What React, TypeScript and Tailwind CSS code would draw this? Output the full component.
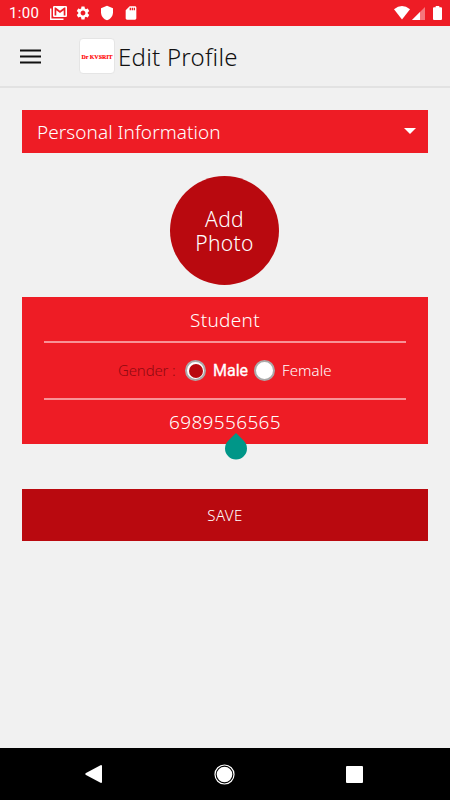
import { useState } from "react";
import {
  MdSettings,
  MdShield,
  MdSdCard,
} from "react-icons/md";

type Gender = "male" | "female";

const genderOptions: { value: Gender; label: string }[] = [
  { value: "male", label: "Male" },
  { value: "female", label: "Female" },
];

function StatusBar() {
  return (
    <div className="flex h-[26px] items-center bg-[#ee1c25] pl-[9px] pr-[8px] text-white">
      <span className="w-[41px] font-['Roboto',sans-serif] text-[15px] leading-[26px] tracking-[0.3px]">
        1:00
      </span>
      <svg className="h-[14px] w-[17px]" viewBox="0 0 17 14" fill="none">
        <path d="M.75 2.5v10.7H13.5" stroke="currentColor" strokeWidth="1.4" />
        <path
          fillRule="evenodd"
          fill="currentColor"
          d="M4.5 0h11A1.3 1.3 0 0 1 17 1.3v8.4a1.3 1.3 0 0 1-1.5 1.3h-11A1.3 1.3 0 0 1 3 9.7V1.3A1.3 1.3 0 0 1 4.5 0zM4.6 1.5v8h1.7V4.3L10 7l3.7-2.7v5.2h1.7v-8h-1.1L10 4.7 5.7 1.5z"
        />
      </svg>
      <MdSettings className="ml-2 size-4" />
      <MdShield className="ml-2 size-4" />
      <MdSdCard className="ml-[8px] size-4" />
      <div className="ml-auto flex items-center">
        <svg className="h-[14px] w-4" viewBox="0 0 16 14" fill="currentColor">
          <path d="M0 3.2Q8-3 16 3.2L8 13.500z" />
        </svg>
        <svg className="ml-[2px] h-[13px] w-[13px]" viewBox="0 0 13 13" fill="currentColor">
          <path opacity="0.4" d="M0 13 13 0v13z" />
          <path d="M0 13 8 5v8z" />
        </svg>
        <svg className="ml-2 h-[14px] w-[9px]" viewBox="0 0 9 14" fill="currentColor">
          <path d="M2.7 0h3.6v1.3H8q1 0 1 1V13q0 1-1 1H1q-1 0-1-1V2.3q0-1 1-1h1.700z" />
        </svg>
      </div>
    </div>
  );
}

function AppBar() {
  return (
    <header className="flex h-[62px] items-center border-b-2 border-[#e2e2e2] bg-[#f0f0f0] pl-5 text-[#111]">
      <button type="button" aria-label="Menu">
        <svg className="mt-px h-[15px] w-[21px]" viewBox="0 0 21 15" fill="currentColor">
          <path d="M0 .6h21v1.900H0zM0 6.600h21v1.900H0zM0 12.600h21v1.900H0z" />
        </svg>
      </button>
      <div className="ml-[38px] flex h-[36px] w-[36px] items-center justify-center rounded-[4px] border border-[#e5e5e5] bg-white">
        <span className="whitespace-nowrap pt-px font-['Liberation_Serif',serif] text-[6px] font-bold leading-none tracking-[-0.05px] text-[#f00] [-webkit-text-stroke:0.15px_#f00]">
          Dr KVSRIT
        </span>
      </div>
      <h1 className="ml-[3px] mt-[2px] text-[24px] font-light tracking-[0.25px]">Edit Profile</h1>
    </header>
  );
}

function GenderField() {
  const [gender, setGender] = useState<Gender>("male");

  return (
    <div className="mx-[22px] flex h-[57px] items-center border-b-2 border-[#f89296] pl-[74px]">
      <span className="w-[67px] text-[15px] font-light tracking-[-0.15px] text-[#8e0a10]">
        Gender :
      </span>
      {genderOptions.map((option) => (
        <button
          key={option.value}
          type="button"
          onClick={() => setGender(option.value)}
          className="flex w-[69px] items-center text-white"
        >
          <span className="grid size-[21px] shrink-0 place-items-center rounded-full border-2 border-[#aaa] bg-white">
            {gender === option.value && (
              <span className="size-[14px] rounded-full bg-[#b9090f]" />
            )}
          </span>
          <span
            className={
              gender === option.value
                ? "ml-[7px] pt-px font-['Roboto',sans-serif] text-[16px] [-webkit-text-stroke:0.3px_#fff]"
                : "ml-[7px] text-[15px] font-light tracking-[0.1px]"
            }
          >
            {option.label}
          </span>
        </button>
      ))}
    </div>
  );
}

function NavBar() {
  return (
    <nav className="mt-auto flex h-[52px] items-center justify-between bg-black pl-[85px] pr-[87px] text-white">
      <svg className="h-[18px] w-[17px]" viewBox="0 0 17 18" fill="currentColor">
        <path d="M16 0q1 0 1 1v16q0 1-1 1L1 10q-1.500-1 0-2z" />
      </svg>
      <svg className="size-[21px]" viewBox="0 0 21 21" fill="currentColor">
        <circle cx="10.5" cy="10.5" r="9.5" fill="none" stroke="currentColor" strokeWidth="1.2" />
        <circle cx="10.5" cy="10.5" r="7.8" />
      </svg>
      <span className="size-[17px] rounded-[1px] bg-white" />
    </nav>
  );
}

export default function App() {
  return (
    <div className="flex h-[800px] w-[450px] flex-col overflow-hidden bg-[#f1f1f1] font-['Noto_Sans',sans-serif]">
      <StatusBar />
      <AppBar />
      <main className="flex flex-col px-[22px] pt-[22px] text-white">
        <button
          type="button"
          className="flex h-[43px] items-center justify-between bg-[#ee1c25] pl-[15px] pr-3 text-[19px] font-light tracking-[0.05px]"
        >
          <span className="pt-px">Personal Information</span>
          <svg className="mb-px h-[6px] w-3" viewBox="0 0 12 6" fill="currentColor">
            <path d="M0 0h12L6 6z" />
          </svg>
        </button>

        <button
          type="button"
          className="mt-[23px] flex size-[109px] flex-col items-center justify-center self-center rounded-full bg-[#b9090f] text-[21px] font-light leading-6 tracking-[0.3px] mr-px"
        >
          <span>Add</span>
          <span>Photo</span>
        </button>

        <section className="relative mt-3 h-[147px] bg-[#ee1c25]">
          <div className="mx-[22px] flex h-[46px] items-center justify-center border-b-2 border-[#f89296] pt-[2px] text-[19px] font-light tracking-[0.3px]">
            Student
          </div>
          <GenderField />
          <div className="flex h-[45px] items-center justify-center text-[19px] font-light tracking-[0.35px]">
            6989556565
          </div>
          <svg
            className="absolute left-[203px] top-[136px] h-[27px] w-[22px]"
            viewBox="0 0 22 27"
            fill="#009688"
          >
            <path d="M11 0 18.800 7.700A11 11 0 1 1 3.200 7.700z" />
          </svg>
        </section>

        <button
          type="button"
          className="mt-[45px] h-[52px] bg-[#b9090f] text-[15px] font-light tracking-[0.4px]"
        >
          SAVE
        </button>
      </main>
      <NavBar />
    </div>
  );
}
